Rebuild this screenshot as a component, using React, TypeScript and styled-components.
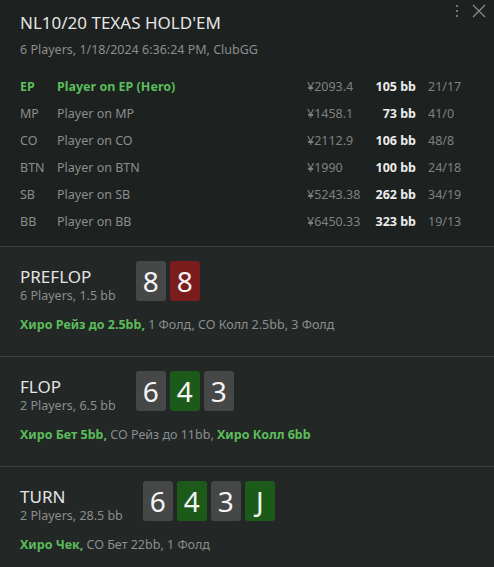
import styled, { createGlobalStyle } from "styled-components";

const GlobalStyle = createGlobalStyle`
  body {
    margin: 0;
    background: #232827;
    font-family: "Noto Sans", "Open Sans", sans-serif;
  }
`;

type Player = {
  pos: string;
  name: string;
  stack: string;
  bb: string;
  stat: string;
  hero?: boolean;
};

const players: Player[] = [
  { pos: "EP", name: "Player on EP (Hero)", stack: "¥2093.4", bb: "105 bb", stat: "21/17", hero: true },
  { pos: "MP", name: "Player on MP", stack: "¥1458.1", bb: "73 bb", stat: "41/0" },
  { pos: "CO", name: "Player on CO", stack: "¥2112.9", bb: "106 bb", stat: "48/8" },
  { pos: "BTN", name: "Player on BTN", stack: "¥1990", bb: "100 bb", stat: "24/18" },
  { pos: "SB", name: "Player on SB", stack: "¥5243.38", bb: "262 bb", stat: "34/19" },
  { pos: "BB", name: "Player on BB", stack: "¥6450.33", bb: "323 bb", stat: "19/13" },
];

type CardTone = "grey" | "red" | "green";
type Action = { text: string; hero?: boolean };

type Street = {
  name: string;
  info: string;
  cards: { rank: string; tone: CardTone }[];
  actions: Action[];
};

const streets: Street[] = [
  {
    name: "PREFLOP",
    info: "6 Players, 1.5 bb",
    cards: [
      { rank: "8", tone: "grey" },
      { rank: "8", tone: "red" },
    ],
    actions: [
      { text: "Хиро Рейз до 2.5bb", hero: true },
      { text: "1 Фолд" },
      { text: "CO Колл 2.5bb" },
      { text: "3 Фолд" },
    ],
  },
  {
    name: "FLOP",
    info: "2 Players, 6.5 bb",
    cards: [
      { rank: "6", tone: "grey" },
      { rank: "4", tone: "green" },
      { rank: "3", tone: "grey" },
    ],
    actions: [
      { text: "Хиро Бет 5bb", hero: true },
      { text: "CO Рейз до 11bb" },
      { text: "Хиро Колл 6bb", hero: true },
    ],
  },
  {
    name: "TURN",
    info: "2 Players, 28.5 bb",
    cards: [
      { rank: "6", tone: "grey" },
      { rank: "4", tone: "green" },
      { rank: "3", tone: "grey" },
      { rank: "J", tone: "green" },
    ],
    actions: [
      { text: "Хиро Чек", hero: true },
      { text: "CO Бет 22bb" },
      { text: "1 Фолд" },
    ],
  },
];

const toneColors: Record<CardTone, string> = {
  grey: "#464747",
  red: "#7b1d1d",
  green: "#1b5a19",
};

export default function App() {
  return (
    <>
      <GlobalStyle />
      <Panel>
        <Header>
          <Controls>
            <DotsIcon viewBox="0 0 4 14">
              <circle cx="2" cy="2" r="1.1" />
              <circle cx="2" cy="7" r="1.1" />
              <circle cx="2" cy="12" r="1.1" />
            </DotsIcon>
            <CloseIcon viewBox="0 0 14 14">
              <path d="M1 1 L13 13 M13 1 L1 13" />
            </CloseIcon>
          </Controls>
          <Title>NL10/20 TEXAS HOLD'EM</Title>
          <Subtitle>6 Players, 1/18/2024 6:36:24 PM, ClubGG</Subtitle>
          <PlayerTable>
            {players.map((p) => (
              <PlayerRow key={p.pos} $hero={p.hero}>
                <Pos>{p.pos}</Pos>
                <Name>{p.name}</Name>
                <Stack>{p.stack}</Stack>
                <Bb>{p.bb}</Bb>
                <Stat>{p.stat}</Stat>
              </PlayerRow>
            ))}
          </PlayerTable>
        </Header>
        {streets.map((s) => (
          <StreetBlock key={s.name}>
            <StreetTop>
              <StreetInfo>
                <StreetName>{s.name}</StreetName>
                <StreetMeta>{s.info}</StreetMeta>
              </StreetInfo>
              <Cards>
                {s.cards.map((c, i) => (
                  <Card key={i} $tone={c.tone}>
                    {c.rank}
                  </Card>
                ))}
              </Cards>
            </StreetTop>
            <Actions>
              {s.actions.map((a, i) => (
                <ActionText key={i} $hero={a.hero}>
                  {a.text}
                  {i < s.actions.length - 1 ? ", " : ""}
                </ActionText>
              ))}
            </Actions>
          </StreetBlock>
        ))}
      </Panel>
    </>
  );
}

const Panel = styled.div`
  width: 494px;
  min-height: 567px;
  background: #232827;
  color: #e6e6e6;
`;

const Header = styled.div`
  position: relative;
  background: #1d2120;
  padding: 11px 20px 11px 20px;
  border-bottom: 1px solid #3b403f;
`;

const Controls = styled.div`
  position: absolute;
  top: 4px;
  right: 8px;
  display: flex;
  align-items: center;
  gap: 13px;
`;

const DotsIcon = styled.svg`
  width: 4px;
  height: 14px;
  fill: #8b8f8e;
`;

const CloseIcon = styled.svg`
  width: 14px;
  height: 14px;
  fill: none;
  stroke: #8b8f8e;
  stroke-width: 1.2;
`;

const Title = styled.div`
  font-size: 17px;
  line-height: 24px;
  color: #e4e4e4;
`;

const Subtitle = styled.div`
  margin-top: 6px;
  font-size: 12.5px;
  line-height: 18px;
  color: #8a8e8d;
`;

const PlayerTable = styled.div`
  margin-top: 14px;
  display: flex;
  flex-direction: column;
`;

const PlayerRow = styled.div<{ $hero?: boolean }>`
  display: grid;
  grid-template-columns: 37px 250px 60px 49px auto;
  height: 27px;
  align-items: center;
  font-size: 12.5px;
  color: #8a8e8d;

  & > span:nth-child(1),
  & > span:nth-child(2) {
    color: ${(p) => (p.$hero ? "#5cbd5a" : "#8a8e8d")};
    font-weight: ${(p) => (p.$hero ? 700 : 400)};
  }
`;

const Pos = styled.span``;
const Name = styled.span``;
const Stack = styled.span`
  color: #7d8180;
`;

const Bb = styled.span`
  text-align: right;
  font-weight: 700;
  color: #ececec;
`;

const Stat = styled.span`
  padding-left: 12px;
  color: #7d8180;
`;

const StreetBlock = styled.div`
  padding: 14px 20px 22px 20px;
  border-bottom: 1px solid #3b403f;

  &:last-child {
    border-bottom: none;
  }
`;

const StreetTop = styled.div`
  display: flex;
  align-items: flex-start;
  gap: 20px;
`;

const StreetInfo = styled.div`
  display: flex;
  flex-direction: column;
  padding-top: 6px;
`;

const StreetName = styled.div`
  font-size: 17px;
  line-height: 20px;
  color: #e4e4e4;
`;

const StreetMeta = styled.div`
  font-size: 12.5px;
  line-height: 18px;
  color: #8a8e8d;
`;

const Cards = styled.div`
  display: flex;
  gap: 4px;
`;

const Card = styled.div<{ $tone: CardTone }>`
  width: 30px;
  height: 40px;
  border-radius: 3px;
  background: ${(p) => toneColors[p.$tone]};
  color: #f4f4f4;
  font-size: 28px;
  line-height: 40px;
  text-align: center;
`;

const Actions = styled.div`
  margin-top: 11px;
  font-size: 12.5px;
  line-height: 18px;
  color: #8a8e8d;
`;

const ActionText = styled.span<{ $hero?: boolean }>`
  color: ${(p) => (p.$hero ? "#5cbd5a" : "#8a8e8d")};
  font-weight: ${(p) => (p.$hero ? 700 : 400)};
`;
